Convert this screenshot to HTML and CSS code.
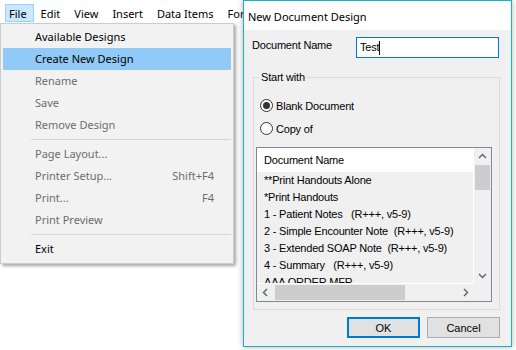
FILE: index.html
```html
<!DOCTYPE html>
<html lang="en">
<head>
    <meta charset="UTF-8">
    <title>New Document Design</title>
    <link rel="stylesheet" href="styles.css">
</head>
<body>
    <div class="menubar">
        <span class="menubar-item active">File</span>
        <span class="menubar-item">Edit</span>
        <span class="menubar-item">View</span>
        <span class="menubar-item">Insert</span>
        <span class="menubar-item">Data Items</span>
        <span class="menubar-item">Format</span>
    </div>

    <div class="menu">
        <div class="menu-item">Available Designs</div>
        <div class="menu-item selected">Create New Design</div>
        <div class="menu-item disabled">Rename</div>
        <div class="menu-item disabled">Save</div>
        <div class="menu-item disabled">Remove Design</div>
        <div class="menu-sep"></div>
        <div class="menu-item disabled">Page Layout...</div>
        <div class="menu-item disabled">Printer Setup...<span class="shortcut">Shift+F4</span></div>
        <div class="menu-item disabled">Print...<span class="shortcut">F4</span></div>
        <div class="menu-item disabled">Print Preview</div>
        <div class="menu-sep"></div>
        <div class="menu-item">Exit</div>
    </div>

    <div class="dialog">
        <div class="titlebar">New Document Design</div>
        <div class="dialog-body">
            <div class="name-row">
                <label for="doc-name">Document Name</label>
                <div class="textbox" id="doc-name">Test<span class="caret"></span></div>
            </div>

            <fieldset class="group">
                <legend>Start with</legend>
                <div class="radio checked"><span class="radio-dot"></span>Blank Document</div>
                <div class="radio"><span class="radio-dot"></span>Copy of</div>

                <div class="listbox">
                    <div class="list-content">
                        <div class="list-header">Document Name</div>
                        <div class="list-rows">
                            <div class="list-row">**Print Handouts Alone</div>
                            <div class="list-row">*Print Handouts</div>
                            <div class="list-row">1 - Patient Notes   (R+++, v5-9)</div>
                            <div class="list-row">2 - Simple Encounter Note  (R+++, v5-9)</div>
                            <div class="list-row">3 - Extended SOAP Note  (R+++, v5-9)</div>
                            <div class="list-row">4 - Summary   (R+++, v5-9)</div>
                            <div class="list-row">AAA ORDER MFR</div>
                        </div>
                    </div>
                    <div class="vscroll">
                        <div class="sb-btn">
                            <svg width="9" height="9" viewBox="0 0 9 9"><polyline points="1,6 4.5,2.5 8,6" /></svg>
                        </div>
                        <div class="v-thumb"></div>
                        <div class="sb-space"></div>
                        <div class="sb-btn">
                            <svg width="9" height="9" viewBox="0 0 9 9"><polyline points="1,3 4.5,6.5 8,3" /></svg>
                        </div>
                    </div>
                    <div class="hscroll">
                        <div class="sb-btn">
                            <svg width="9" height="9" viewBox="0 0 9 9"><polyline points="6,1 2.5,4.5 6,8" /></svg>
                        </div>
                        <div class="h-thumb"></div>
                        <div class="sb-space"></div>
                        <div class="sb-btn">
                            <svg width="9" height="9" viewBox="0 0 9 9"><polyline points="3,1 6.5,4.5 3,8" /></svg>
                        </div>
                    </div>
                    <div class="sb-corner"></div>
                </div>
            </fieldset>

            <div class="buttons">
                <button class="btn default">OK</button>
                <button class="btn">Cancel</button>
            </div>
        </div>
    </div>
</body>
</html>
```

FILE: styles.css
```css
body {
    margin: 0;
    width: 516px;
    height: 350px;
    position: relative;
    overflow: hidden;
    background-color: #fff;
    font-family: "Noto Sans", sans-serif;
    font-size: 11px;
    color: #000;
}
.menubar {
    display: flex;
    gap: 3px;
    height: 22px;
    padding: 4px 0 0 5px;
    box-sizing: border-box;
    white-space: nowrap;
}
.menubar-item {
    height: 18px;
    line-height: 17px;
    padding: 0 6px 0 3px;
    border: 1px solid transparent;
    box-sizing: border-box;
}
.menubar-item.active {
    background-color: #cce8ff;
    border-color: #99d1ff;
}
.menu {
    position: absolute;
    left: 0;
    top: 23px;
    width: 234px;
    box-sizing: border-box;
    padding: 2px 2px 3px 2px;
    background-color: #f2f2f2;
    border: 1px solid #cccccc;
    box-shadow: 2px 2px 3px rgba(0, 0, 0, 0.35);
}
.menu-item {
    display: flex;
    justify-content: space-between;
    height: 22px;
    line-height: 22px;
    padding: 0 17px 0 32px;
}
.menu-item.selected {
    background-color: #91c9f7;
}
.menu-item.disabled {
    color: #6d6d6d;
}
.menu-sep {
    height: 7px;
    margin-left: 28px;
    background: linear-gradient(#d7d7d7, #d7d7d7) no-repeat 0 3px / 100% 1px;
}
.dialog {
    position: absolute;
    left: 243px;
    top: 0;
    width: 269px;
    height: 347px;
    box-sizing: border-box;
    border: 1px solid #17b0c5;
    background-color: #f0f0f0;
    box-shadow: 0 0 6px rgba(0, 0, 0, 0.3);
}
.titlebar {
    height: 29px;
    box-sizing: border-box;
    padding: 8px 0 0 4px;
    line-height: 16px;
    background-color: #fff;
}
.dialog-body {
    padding: 7px 11px 0 8px;
    font-family: "Liberation Sans", Arial, sans-serif;
    font-size: 11px;
    letter-spacing: -0.2px;
}
.name-row {
    display: flex;
}
.name-row label {
    width: 104px;
    line-height: 16px;
}
.textbox {
    width: 143px;
    height: 21px;
    box-sizing: border-box;
    border: 1px solid #0078d7;
    background-color: #fff;
    padding-left: 3px;
    line-height: 19px;
    display: flex;
    align-items: center;
}
.caret {
    width: 1px;
    height: 14px;
    background-color: #000;
}
.group {
    margin: 12px 0 0 1px;
    padding: 10px 7px 7px 2px;
    border: 1px solid #dcdcdc;
    min-width: 0;
}
.group legend {
    margin-left: 3px;
    padding: 0 2px;
    line-height: 14px;
}
.radio {
    display: flex;
    align-items: center;
    gap: 3px;
    height: 23px;
    padding-left: 4px;
}
.radio-dot {
    width: 13px;
    height: 13px;
    box-sizing: border-box;
    border: 1px solid #333;
    border-radius: 50%;
    background-color: #fff;
    display: flex;
    align-items: center;
    justify-content: center;
}
.radio.checked .radio-dot::after {
    content: "";
    width: 7px;
    height: 7px;
    border-radius: 50%;
    background-color: #333;
}
.listbox {
    margin-top: 7px;
    width: 236px;
    height: 155px;
    box-sizing: border-box;
    border: 1px solid #828790;
    background-color: #f0f0f0;
    display: grid;
    grid-template-columns: 217px 17px;
    grid-template-rows: 136px 17px;
}
.list-content {
    display: flex;
    flex-direction: column;
    padding: 0 1px 1px 0;
    background-color: #fff;
    overflow: hidden;
}
.list-header {
    height: 24px;
    line-height: 24px;
    padding-left: 7px;
    flex-shrink: 0;
}
.list-rows {
    flex: 1;
    overflow: hidden;
    padding-left: 7px;
    background-color: #f0f0f0;
}
.list-row {
    height: 17px;
    line-height: 17px;
    white-space: pre;
}
.vscroll {
    display: flex;
    flex-direction: column;
}
.hscroll {
    display: flex;
}
.sb-btn {
    width: 17px;
    height: 17px;
    flex-shrink: 0;
    display: flex;
    align-items: center;
    justify-content: center;
}
.sb-btn polyline {
    fill: none;
    stroke: #606060;
    stroke-width: 1.4;
}
.sb-space {
    flex: 1;
}
.v-thumb {
    height: 25px;
    margin: 0 1px;
    background-color: #cdcdcd;
}
.h-thumb {
    width: 130px;
    margin: 1px 0 1px 1px;
    background-color: #cdcdcd;
}
.buttons {
    display: flex;
    justify-content: flex-end;
    gap: 7px;
    margin-top: 7px;
}
.btn {
    width: 73px;
    height: 21px;
    padding: 0;
    border: 1px solid #adadad;
    background-color: #e1e1e1;
    font-family: "Liberation Sans", Arial, sans-serif;
    font-size: 11px;
    color: #000;
}
.btn.default {
    border-color: #0078d7;
    box-shadow: inset 0 0 0 1px #0078d7;
}
```
